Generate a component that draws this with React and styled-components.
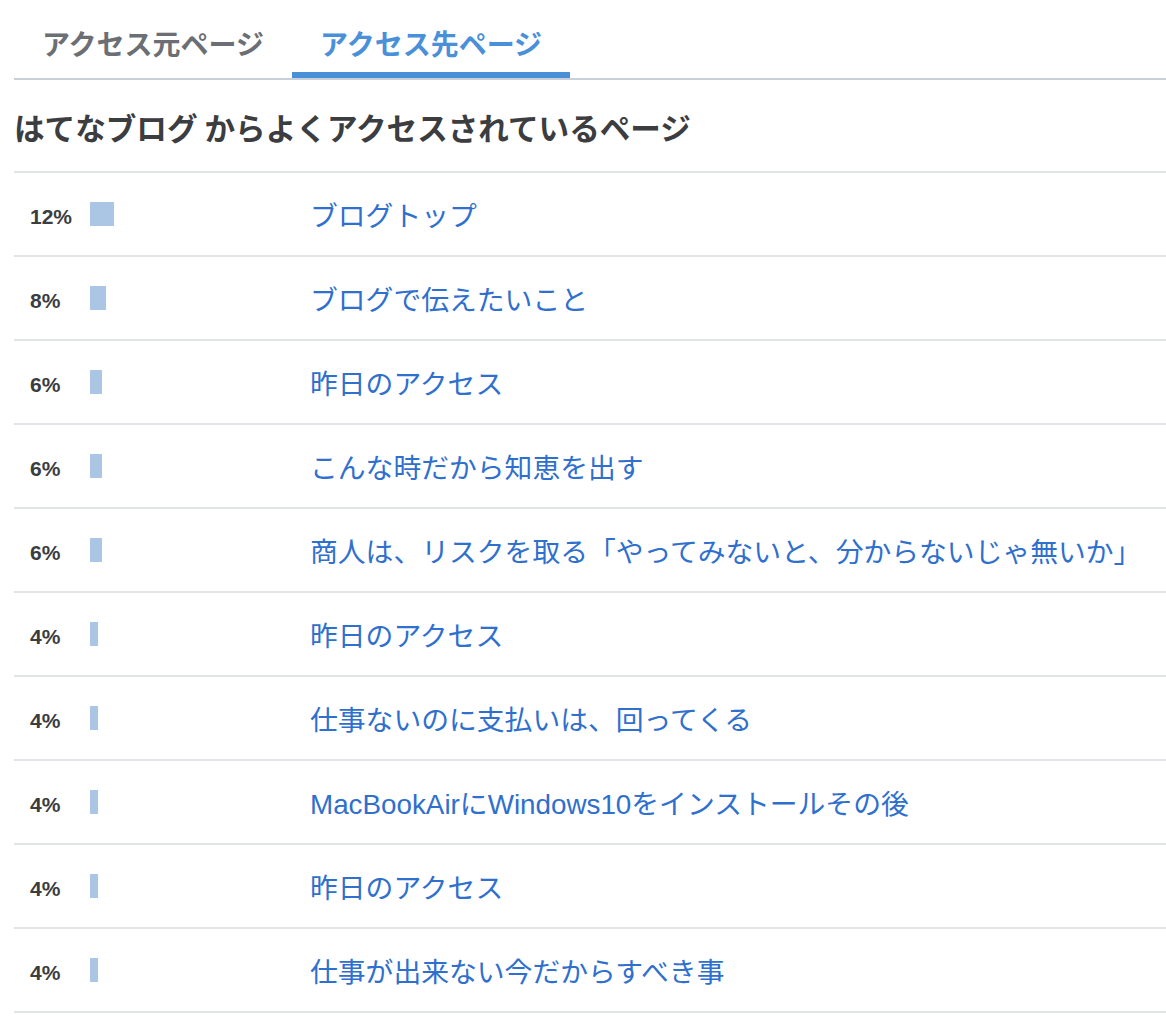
import React from 'react';
import styled, { createGlobalStyle } from 'styled-components';

const GlobalStyle = createGlobalStyle`
	body {
		margin: 0;
		background: #fff;
		font-family: "Liberation Sans", "Noto Sans CJK JP", sans-serif;
	}
`;

const Page = styled.div`
	margin-left: 14px;
`;

const Tabs = styled.div`
	display: flex;
	border-bottom: 2px solid #c8d1db;
`;

const Tab = styled.div`
	padding: 24px 28px 10px;
	line-height: 38px;
	font-size: 28px;
	font-weight: 700;
	font-family: "Noto Sans CJK JP", sans-serif;
	color: ${(p) => (p.active ? '#4a90d9' : '#6b6f74')};
	border-bottom: 6px solid ${(p) => (p.active ? '#4a90d9' : 'transparent')};
`;

const Heading = styled.h2`
	margin: 0;
	padding: 27px 0 24px;
	line-height: 40px;
	font-size: 30.6px;
	font-weight: 700;
	font-family: "Noto Sans CJK JP", sans-serif;
	color: #3b3d41;
`;

const List = styled.ul`
	list-style: none;
	margin: 0;
	padding: 0;
	border-top: 2px solid #e1e5ea;
`;

const Row = styled.li`
	display: grid;
	grid-template-columns: 296px 1fr;
	align-items: center;
	height: 82px;
	border-bottom: 2px solid #e1e5ea;
`;

const Stat = styled.div`
	display: flex;
	align-items: center;
	padding-left: 16px;
`;

const Percent = styled.span`
	width: 60px;
	font-size: 21px;
	font-weight: 700;
	color: #3b3d41;
	padding-top: 6px;
`;

const Bar = styled.span`
	display: block;
	height: 24px;
	background: #abc6e5;
`;

const PageLink = styled.a`
	font-size: 27.8px;
	color: #2f6fcd;
	text-decoration: none;
	white-space: nowrap;
`;

const rows = [
	[12, 'ブログトップ'],
	[8, 'ブログで伝えたいこと'],
	[6, '昨日のアクセス'],
	[6, 'こんな時だから知恵を出す'],
	[6, '商人は、リスクを取る「やってみないと、分からないじゃ無いか」'],
	[4, '昨日のアクセス'],
	[4, '仕事ないのに支払いは、回ってくる'],
	[4, 'MacBookAirにWindows10をインストールその後'],
	[4, '昨日のアクセス'],
	[4, '仕事が出来ない今だからすべき事'],
];

const App = () => (
	<>
		<GlobalStyle />
		<Page>
			<Tabs>
				<Tab>アクセス元ページ</Tab>
				<Tab active>アクセス先ページ</Tab>
			</Tabs>
			<Heading>はてなブログ からよくアクセスされているページ</Heading>
			<List>
				{rows.map(([pct, title], i) => (
					<Row key={i}>
						<Stat>
							<Percent>{pct}%</Percent>
							<Bar style={{ width: pct * 2 }} />
						</Stat>
						<PageLink href="#">{title}</PageLink>
					</Row>
				))}
			</List>
		</Page>
	</>
);

export default App;
